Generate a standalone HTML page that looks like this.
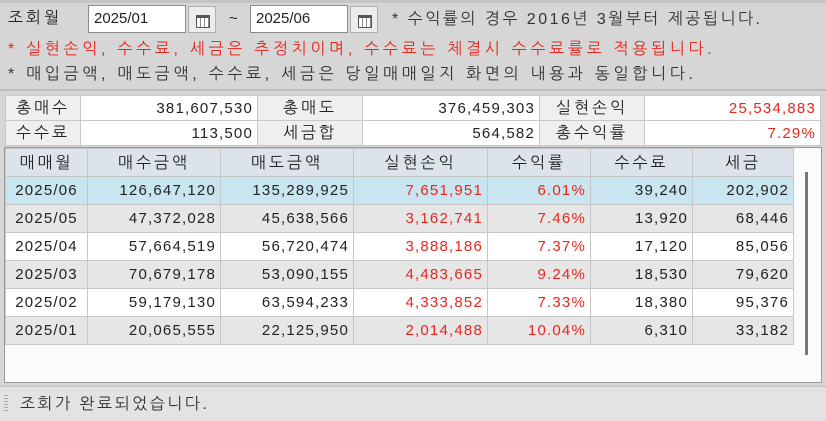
<!DOCTYPE html><html><head><meta charset="utf-8"><style>
*{box-sizing:border-box;margin:0;padding:0}
body{width:826px;height:421px;background:#d6d6d6;font-family:"Liberation Sans","NanumGothic","Noto Sans CJK KR",sans-serif;font-size:15px;color:#222;position:relative;overflow:hidden}
.a{position:absolute;white-space:nowrap}
.inp{position:absolute;background:#fff;border:1px solid #8a8a8a;height:28px;top:5px;padding:4px 5px;font-size:15px}
.btn{position:absolute;top:6px;width:28px;height:27px;background:#ececec;border:1px solid #b0b0b0}
.btn:after{content:"";position:absolute;left:7px;top:8px;width:12px;height:9px;border:1px solid #555;border-top:3px solid #555;background:repeating-linear-gradient(90deg,#fff 0 3px,#888 3px 4px)}
table{border-collapse:collapse;position:absolute}
td{border:1px solid #c8c8c8;padding:0 4px;height:25px;text-align:right;letter-spacing:1.2px}
td.l{background:#efefef;text-align:center;letter-spacing:3px;font-size:16px}
.r{color:#e8261e}
#g td{height:28px;border-color:#c6c6c6}
#g tr.h td{background:#dde3ea;text-align:center;letter-spacing:3px;font-size:16px}
#g tr.s td{background:#c8e5f0}
#g tr.o td{background:#e6e6e6}
#g tr.w td{background:#fff}
#g td:first-child{text-align:center}
</style></head><body>
<div class="a" style="left:0;top:0;width:826px;height:3px;background:#c4c4c4"></div>
<div class="a" style="left:8px;top:8px;font-size:16px;letter-spacing:3px">조회월</div>
<div class="inp" style="left:88px;width:98px">2025/01</div>
<div class="btn" style="left:188px"></div>
<div class="a" style="left:229px;top:10px">~</div>
<div class="inp" style="left:250px;width:98px">2025/06</div>
<div class="btn" style="left:350px"></div>
<div class="a" style="left:392px;top:9px;font-size:16px;letter-spacing:2.5px;color:#333">* 수익률의 경우 2016년 3월부터 제공됩니다.</div>
<div class="a r" style="left:8px;top:39px;font-size:16px;letter-spacing:3.7px">* 실현손익, 수수료, 세금은 추정치이며, 수수료는 체결시 수수료률로 적용됩니다.</div>
<div class="a" style="left:8px;top:64px;font-size:16px;letter-spacing:3.7px;color:#333">* 매입금액, 매도금액, 수수료, 세금은 당일매매일지 화면의 내용과 동일합니다.</div>
<div class="a" style="left:0;top:89px;width:826px;height:2px;background:#bdbdbd"></div>
<table style="left:5px;top:95px;width:816px;background:#fff">
<tr><td class="l" style="width:75px">총매수</td><td style="width:177px">381,607,530</td><td class="l" style="width:105px">총매도</td><td style="width:177px">376,459,303</td><td class="l" style="width:105px">실현손익</td><td class="r">25,534,883</td></tr>
<tr><td class="l">수수료</td><td>113,500</td><td class="l">세금합</td><td>564,582</td><td class="l">총수익률</td><td class="r">7.29%</td></tr>
</table>
<div class="a" style="left:4px;top:147px;width:818px;height:236px;background:#fafbfd;border:1px solid #9a9a9a"></div>
<table id="g" style="left:5px;top:148px;width:789px">
<tr class="h"><td style="width:82px">매매월</td><td style="width:133px">매수금액</td><td style="width:133px">매도금액</td><td style="width:134px">실현손익</td><td style="width:103px">수익률</td><td style="width:102px">수수료</td><td>세금</td></tr>
<tr class="s"><td>2025/06</td><td>126,647,120</td><td>135,289,925</td><td class="r">7,651,951</td><td class="r">6.01%</td><td>39,240</td><td>202,902</td></tr>
<tr class="o"><td>2025/05</td><td>47,372,028</td><td>45,638,566</td><td class="r">3,162,741</td><td class="r">7.46%</td><td>13,920</td><td>68,446</td></tr>
<tr class="w"><td>2025/04</td><td>57,664,519</td><td>56,720,474</td><td class="r">3,888,186</td><td class="r">7.37%</td><td>17,120</td><td>85,056</td></tr>
<tr class="o"><td>2025/03</td><td>70,679,178</td><td>53,090,155</td><td class="r">4,483,665</td><td class="r">9.24%</td><td>18,530</td><td>79,620</td></tr>
<tr class="w"><td>2025/02</td><td>59,179,130</td><td>63,594,233</td><td class="r">4,333,852</td><td class="r">7.33%</td><td>18,380</td><td>95,376</td></tr>
<tr class="o"><td>2025/01</td><td>20,065,555</td><td>22,125,950</td><td class="r">2,014,488</td><td class="r">10.04%</td><td>6,310</td><td>33,182</td></tr>
</table>
<div class="a" style="left:805px;top:172px;width:3px;height:183px;background:#777"></div>
<div class="a" style="left:0;top:386px;width:826px;height:35px;background:#e3e3e3;border-top:1px solid #c0c0c0"></div>
<div class="a" style="left:4px;top:395px;width:4px;height:18px;background:repeating-linear-gradient(#aaa 0 1px,transparent 1px 3px)"></div>
<div class="a" style="left:20px;top:394px;font-size:16px;letter-spacing:2.5px;color:#333">조회가 완료되었습니다.</div>
</body></html>
